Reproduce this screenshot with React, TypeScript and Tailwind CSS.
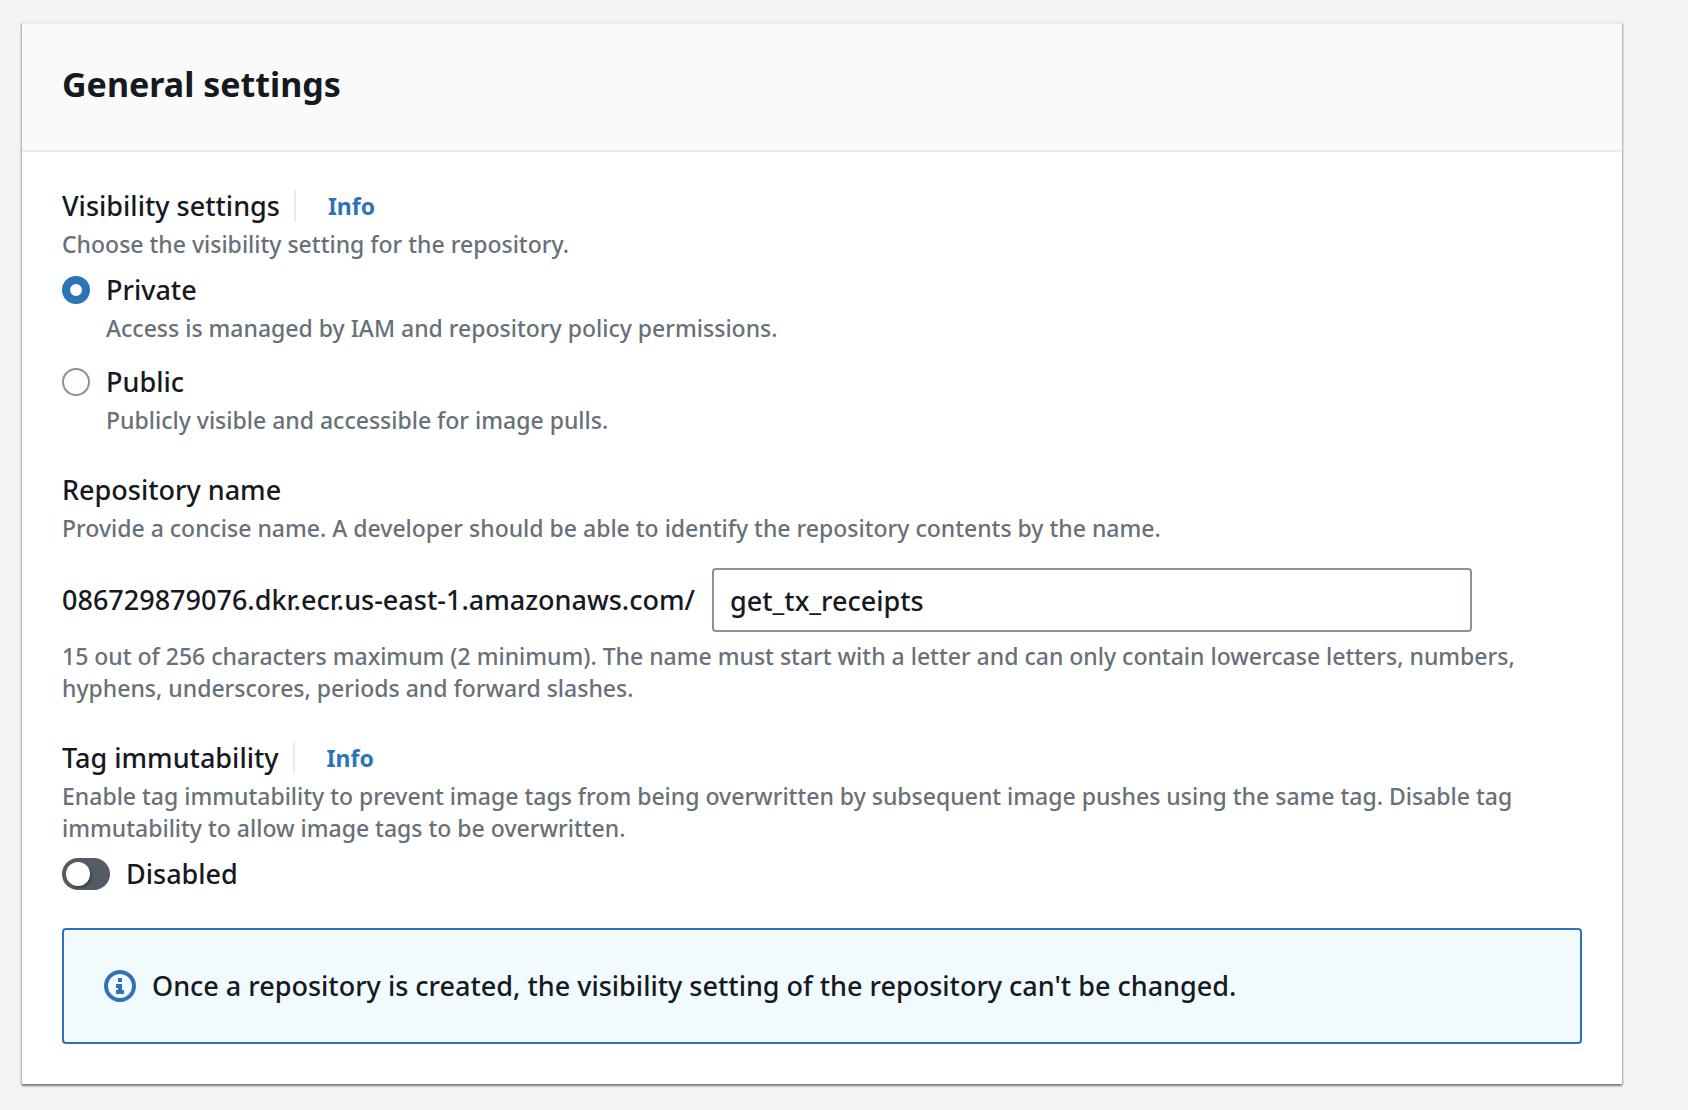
import { useState, type ReactNode } from "react";

function Hint({ children, id }: { children: ReactNode; id?: string }) {
  return (
    <p id={id} className="text-[23px] leading-8 text-[#687078]">
      {children}
    </p>
  );
}

function LabelWithInfo({ id, children }: { id: string; children: ReactNode }) {
  return (
    <div className="flex items-center">
      <h3 id={id} className="mr-[14px] leading-11">
        {children}
      </h3>
      <span className="h-8 border-l-2 border-[#eaeded]" />
      <a href="#info" className="ml-8 text-[23px] font-bold leading-8 text-[#2e73b8]">
        Info
      </a>
    </div>
  );
}

type RadioProps = {
  value: string;
  label: string;
  hint: string;
  selected: string;
  onSelect: (value: string) => void;
};

function RadioOption({ value, label, hint, selected, onSelect }: RadioProps) {
  return (
    <div className="flex gap-4">
      <input
        type="radio"
        id={value}
        name="visibility"
        value={value}
        checked={selected === value}
        onChange={() => onSelect(value)}
        aria-describedby={value + "-hint"}
        className="mt-2 size-7 shrink-0 appearance-none rounded-full border-2 border-[#879596] bg-white checked:border-8 checked:border-[#2e73b8]"
      />
      <div>
        <label htmlFor={value} className="block leading-11">
          {label}
        </label>
        <Hint id={value + "-hint"}>{hint}</Hint>
      </div>
    </div>
  );
}

function InfoIcon() {
  return (
    <svg viewBox="0 0 32 32" className="size-8 shrink-0" fill="none" aria-hidden="true">
      <circle cx="16" cy="16" r="14" stroke="#2e73b8" strokeWidth="4" />
      <path d="M14 8h4v4h-4zM12 14h6v6h2v4h-8v-4h2v-2h-2z" fill="#2e73b8" />
    </svg>
  );
}

export default function App() {
  const [visibility, setVisibility] = useState("private");
  const [name, setName] = useState("get_tx_receipts");
  const [immutable, setImmutable] = useState(false);

  return (
    <main className="min-h-screen bg-[#f2f3f3] pt-[22px] pr-[66px] pb-6 pl-[22px] font-['Noto_Sans',sans-serif] text-[27px] font-medium text-[#16191f]">
      <section className="border-t-2 border-[#eaeded] bg-white shadow-[0_2px_2px_0_rgba(0,28,36,0.4),1px_1px_2px_0_rgba(0,28,36,0.2),-1px_1px_2px_0_rgba(0,28,36,0.2)]">
        <header className="border-b-2 border-[#eaeded] bg-[#fafafa] px-10 pt-[38px] pb-11">
          <h2 className="text-[34px] font-bold leading-11">General settings</h2>
        </header>
        <div className="flex flex-col gap-8 px-10 pt-8 pb-10">
          <div>
            <LabelWithInfo id="visibility-label">Visibility settings</LabelWithInfo>
            <Hint>Choose the visibility setting for the repository.</Hint>
            <div role="radiogroup" aria-labelledby="visibility-label" className="mt-2 flex flex-col gap-4">
              <RadioOption
                value="private"
                label="Private"
                hint="Access is managed by IAM and repository policy permissions."
                selected={visibility}
                onSelect={setVisibility}
              />
              <RadioOption
                value="public"
                label="Public"
                hint="Publicly visible and accessible for image pulls."
                selected={visibility}
                onSelect={setVisibility}
              />
            </div>
          </div>

          <div>
            <label htmlFor="repository-name" className="block leading-11">
              Repository name
            </label>
            <Hint>
              Provide a concise name. A developer should be able to identify the repository contents by the name.
            </Hint>
            <div className="mt-6 mb-2 flex items-center">
              <span className="min-w-0 flex-1 whitespace-nowrap">086729879076.dkr.ecr.us-east-1.amazonaws.com/</span>
              <input
                id="repository-name"
                type="text"
                value={name}
                onChange={(e) => setName(e.target.value)}
                className="mr-[110px] h-16 w-1/2 rounded-sm border-2 border-[#879596] bg-white px-4 outline-none"
              />
            </div>
            <Hint>
              {`${name.length} out of 256 characters maximum (2 minimum). The name must start with a letter and can only contain lowercase letters, numbers, hyphens, underscores, periods and forward slashes.`}
            </Hint>
          </div>

          <div>
            <LabelWithInfo id="immutability-label">Tag immutability</LabelWithInfo>
            <Hint>
              Enable tag immutability to prevent image tags from being overwritten by subsequent image pushes using the
              same tag. Disable tag immutability to allow image tags to be overwritten.
            </Hint>
            <label className="mt-2 flex items-center gap-4 leading-11">
              <input
                type="checkbox"
                role="switch"
                checked={immutable}
                onChange={(e) => setImmutable(e.target.checked)}
                className="flex h-8 w-12 appearance-none items-center rounded-full bg-[#545b64] px-1 before:size-6 before:rounded-full before:bg-white before:shadow-[2px_2px_2px_rgba(0,0,0,0.25)] checked:justify-end checked:bg-[#2e73b8]"
              />
              {immutable ? "Enabled" : "Disabled"}
            </label>
          </div>

          <div role="note" className="flex items-center gap-4 rounded-sm border-2 border-[#2e73b8] bg-[#f1fafd] px-10 py-[34px]">
            <InfoIcon />
            <p className="leading-11">
              Once a repository is created, the visibility setting of the repository can't be changed.
            </p>
          </div>
        </div>
      </section>
    </main>
  );
}
